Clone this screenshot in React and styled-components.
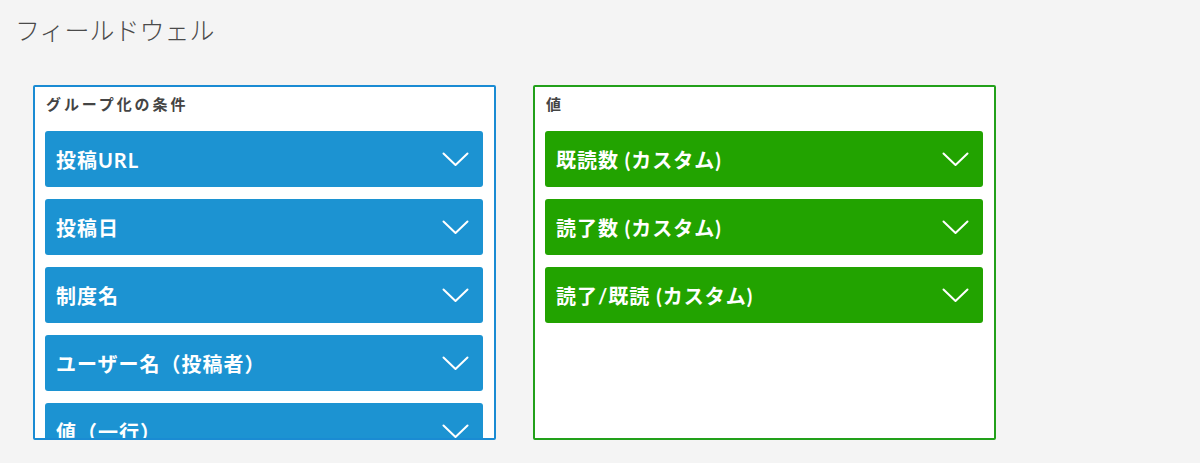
import React from 'react';
import styled, { createGlobalStyle } from 'styled-components';

const GlobalStyle = createGlobalStyle`
  html, body {
    margin: 0;
    padding: 0;
    background: #f4f4f4;
  }
  body {
    font-family: Lato, "Noto Sans CJK JP", sans-serif;
    color: #444;
  }
`;

const Page = styled.div`
  width: 1200px;
  height: 463px;
  box-sizing: border-box;
  padding: 14px 0 0 15px;
  overflow: hidden;
`;

const Title = styled.h1`
  margin: 0;
  font-size: 25px;
  font-weight: 300;
  line-height: 32px;
  color: #4a4a4a;
`;

const Wells = styled.div`
  display: flex;
  gap: 37px;
  margin: 39px 0 0 18px;
`;

const Well = styled.div`
  width: 463px;
  height: 355px;
  box-sizing: border-box;
  background: #fff;
  border: 2px solid ${p => p.$color};
  border-radius: 2px;
  padding: 6px 11px 0 10px;
  overflow: hidden;
  display: flex;
  flex-direction: column;
`;

const WellLabel = styled.div`
  font-size: 15px;
  font-weight: 700;
  line-height: 22px;
  color: #444;
  letter-spacing: 2.9px;
  margin: 0 0 16px 1px;
`;

const FieldList = styled.div`
  display: flex;
  flex-direction: column;
  gap: 12px;
`;

const Field = styled.div`
  flex: none;
  height: 56px;
  border-radius: 3px;
  background: ${p => p.$color};
  color: #fff;
  display: flex;
  align-items: center;
  justify-content: space-between;
  padding: 0 14px 0 11px;
  font-size: 20px;
  font-weight: 700;
  letter-spacing: 1px;
`;

const Chevron = () => (
  <svg width="27" height="15" viewBox="0 0 27 15" fill="none">
    <path d="M1.5 1.5 L13.5 13 L25.5 1.5" stroke="#fff" strokeWidth="2" strokeLinecap="round" strokeLinejoin="round" />
  </svg>
);

const groupBy = ['投稿URL', '投稿日', '制度名', 'ユーザー名（投稿者）', '値（一行）'];
const values = ['既読数 (カスタム)', '読了数 (カスタム)', '読了/既読 (カスタム)'];

export default function App() {
  return (
    <Page>
      <GlobalStyle />
      <Title>フィールドウェル</Title>
      <Wells>
        <Well $color="#1a8bd3">
          <WellLabel>グループ化の条件</WellLabel>
          <FieldList>
            {groupBy.map(name => (
              <Field key={name} $color="#1c93d2">
                <span>{name}</span>
                <Chevron />
              </Field>
            ))}
          </FieldList>
        </Well>
        <Well $color="#22a01a">
          <WellLabel>値</WellLabel>
          <FieldList>
            {values.map(name => (
              <Field key={name} $color="#22a300">
                <span>{name}</span>
                <Chevron />
              </Field>
            ))}
          </FieldList>
        </Well>
      </Wells>
    </Page>
  );
}
